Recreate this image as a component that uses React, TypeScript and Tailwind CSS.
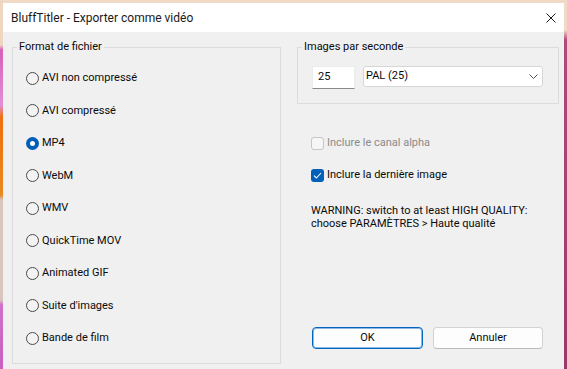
import React from "react";

const font = "font-['Roboto','Liberation_Sans',sans-serif]";

function Radio({ label, checked }: { label: string; checked?: boolean }) {
  return (
    <div className="flex h-[32.5px] items-center">
      {checked ? (
        <span className="flex h-[13px] w-[13px] items-center justify-center rounded-full bg-[#005fb8]">
          <span className="h-[5px] w-[5px] rounded-full bg-white" />
        </span>
      ) : (
        <span className="h-[13px] w-[13px] rounded-full border border-[#4a4a4a] bg-[#f3f3f3]" />
      )}
      <span className="ml-[3px] text-[11px] leading-[16px] text-[#0a0a0a]">{label}</span>
    </div>
  );
}

export default function App() {
  const formats = [
    "AVI non compressé",
    "AVI compressé",
    "MP4",
    "WebM",
    "WMV",
    "QuickTime MOV",
    "Animated GIF",
    "Suite d'images",
    "Bande de film",
  ];
  return (
    <div className={`flex h-[369px] w-[567px] overflow-hidden ${font}`}>
      <div className="w-[3px] bg-[linear-gradient(to_bottom,#efd6c0_0px,#efd6c0_45px,#d860b8_50px,#e28ed6_105px,#f07010_117px,#e88a20_195px,#d8c6bc_200px,#d8c6bc_300px,#d070c8_305px,#c860c0_369px)]" />
      <div className="flex flex-1 flex-col">
        <div className="h-[3px] bg-[#f0dac5]" />
        <div className="flex flex-1 flex-col overflow-hidden rounded-t-[8px] bg-[#f0f0f0]">
          <div className="flex h-[29px] items-center justify-between bg-white pl-[8px] pr-[8px]">
            <span className="text-[12px] leading-[16px] text-[#1a1a1a]">BluffTitler - Exporter comme vidéo</span>
            <svg width="10" height="10" viewBox="0 0 10 10" className="mt-[1px]">
              <path d="M0.5 0.5 L9.5 9.5 M9.5 0.5 L0.5 9.5" stroke="#1a1a1a" strokeWidth="1" fill="none" />
            </svg>
          </div>
          <div className="flex gap-[16px] pl-[9px] pt-[7px]">
            <fieldset className="h-[325px] w-[269px] border border-[#dcdcdc]">
              <legend className="ml-[4px] px-[2px] text-[11px] leading-[16px] text-[#0a0a0a]">Format de fichier</legend>
              <div className="pl-[13px] pt-[7px]">
                {formats.map((f) => (
                  <Radio key={f} label={f} checked={f === "MP4"} />
                ))}
              </div>
            </fieldset>
            <div className="flex w-[262px] flex-col">
              <fieldset className="h-[65px] border border-[#dcdcdc]">
                <legend className="ml-[4px] px-[2px] text-[11px] leading-[16px] text-[#0a0a0a]">Images par seconde</legend>
                <div className="mt-[11px] flex gap-[8px] pl-[14px]">
                  <div className="flex h-[23px] w-[43px] items-center border-x border-t border-b border-x-[#ececec] border-t-[#ececec] border-b-[#8a8a8a] bg-white pl-[5px] text-[11px] text-[#0a0a0a]">
                    25
                  </div>
                  <div className="flex h-[21px] w-[180px] items-center justify-between rounded-[3px] border border-[#d6d6d6] bg-white pl-[2px] pr-[4px] text-[11px] text-[#0a0a0a]">
                    <span>PAL (25)</span>
                    <svg width="9" height="5" viewBox="0 0 9 5">
                      <path d="M0.5 0.5 L4.5 4.5 L8.5 0.5" stroke="#555" strokeWidth="1" fill="none" />
                    </svg>
                  </div>
                </div>
              </fieldset>
              <div className="ml-[14px] mt-[31px] flex h-[16px] items-center">
                <span className="h-[13px] w-[13px] rounded-[3px] border border-[#c6c6c6] bg-[#f6f6f6]" />
                <span className="ml-[3px] text-[11px] leading-[16px] text-[#8a8a8a]">Inclure le canal alpha</span>
              </div>
              <div className="ml-[14px] mt-[16px] flex h-[16px] items-center">
                <span className="flex h-[13px] w-[13px] items-center justify-center rounded-[3px] bg-[#005fb8]">
                  <svg width="9" height="7" viewBox="0 0 9 7">
                    <path d="M1 3.6 L3.4 6 L8 1" stroke="white" strokeWidth="1.1" fill="none" />
                  </svg>
                </span>
                <span className="ml-[3px] text-[11px] leading-[16px] text-[#0a0a0a]">Inclure la dernière image</span>
              </div>
              <div className="ml-[14px] mt-[21px] text-[11px] leading-[13px] text-[#0a0a0a]">
                <div>WARNING: switch to at least HIGH QUALITY:</div>
                <div>choose PARAMÈTRES &gt; Haute qualité</div>
              </div>
              <div className="ml-[15px] mt-[97px] flex gap-[10px]">
                <button className="h-[22px] w-[111px] rounded-[4px] border border-[#0067c0] bg-[#fdfdfd] text-[11px] text-[#0a0a0a] shadow-[inset_0_0_0_1px_#8cb8e2]">
                  OK
                </button>
                <button className="h-[22px] w-[110px] rounded-[4px] border border-[#d3d3d3] border-b-[#b9b9b9] bg-[#fdfdfd] text-[11px] text-[#0a0a0a]">
                  Annuler
                </button>
              </div>
            </div>
          </div>
        </div>
      </div>
      <div className="w-[3px] bg-[linear-gradient(to_bottom,#f0dac5_0px,#f0dac5_30px,#b04a78_40px,#9a3a6a_369px)]" />
    </div>
  );
}
